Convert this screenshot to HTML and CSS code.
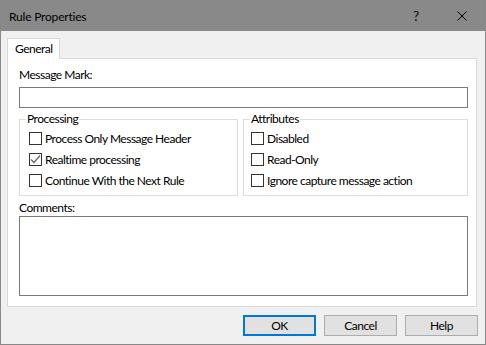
FILE: index.html
```html
<!DOCTYPE html>
<html>
<head>
<meta charset="utf-8">
<link rel="stylesheet" href="styles.css">
</head>
<body>
<div class="window">
  <div class="titlebar">
    <span class="title">Rule Properties</span>
    <span class="tb-btn">?</span>
    <span class="tb-btn"><svg width="10" height="10" viewBox="0 0 10 10"><path d="M0.5 0.5 L9.5 9.5 M9.5 0.5 L0.5 9.5" stroke="#000" stroke-width="1"/></svg></span>
  </div>
  <div class="content">
    <div class="tabs"><div class="tab">General</div></div>
    <div class="panel">
      <div class="label">Message Mark:</div>
      <div class="input"></div>
      <div class="groups">
        <fieldset class="group group-left">
          <legend>Processing</legend>
          <div class="check"><span class="box"></span><span>Process Only Message Header</span></div>
          <div class="check"><span class="box"><svg width="11" height="11" viewBox="0 0 11 11"><path d="M1 5.5 L4 8.5 L10 1.5" fill="none" stroke="#666" stroke-width="1.2"/></svg></span><span>Realtime processing</span></div>
          <div class="check"><span class="box"></span><span>Continue With the Next Rule</span></div>
        </fieldset>
        <fieldset class="group group-right">
          <legend>Attributes</legend>
          <div class="check"><span class="box"></span><span>Disabled</span></div>
          <div class="check"><span class="box"></span><span>Read-Only</span></div>
          <div class="check"><span class="box"></span><span>Ignore capture message action</span></div>
        </fieldset>
      </div>
      <div class="label label-comments">Comments:</div>
      <div class="textarea"></div>
    </div>
    <div class="buttons">
      <div class="btn btn-default">OK</div>
      <div class="btn">Cancel</div>
      <div class="btn">Help</div>
    </div>
  </div>
</div>
</body>
</html>
```

FILE: styles.css
```css
* { box-sizing: border-box; }
body {
  margin: 0;
  font-family: Lato, "Noto Sans", sans-serif;
  font-size: 12px;
  letter-spacing: -0.5px;
  color: #000;
}
.window {
  width: 486px;
  height: 345px;
  border: 1px solid #888;
  background: #f0f0f0;
  display: flex;
  flex-direction: column;
}
.titlebar {
  height: 30px;
  flex: none;
  background: #898989;
  display: flex;
  align-items: center;
  padding-left: 8px;
}
.title { flex: 1; letter-spacing: -0.2px; }
.tb-btn {
  width: 46px;
  height: 30px;
  display: flex;
  align-items: center;
  justify-content: center;
  font-size: 13px;
}
.content {
  flex: 1;
  display: flex;
  flex-direction: column;
  padding: 7px 8px 8px 6px;
}
.tabs { display: flex; height: 20px; flex: none; }
.tab {
  width: 53px;
  height: 21px;
  border: 1px solid #d9d9d9;
  border-bottom: none;
  background: #fff;
  padding-left: 7px;
  line-height: 19px;
  position: relative;
  z-index: 1;
}
.panel {
  flex: none;
  height: 249px;
  background: #fff;
  border: 1px solid #d9d9d9;
  padding: 8px 8px 10px 11px;
  display: flex;
  flex-direction: column;
}
.label { line-height: 16px; height: 16px; }
.input {
  height: 21px;
  margin-top: 4px;
  border: 1px solid #7a7a7a;
  background: #fff;
}
.groups {
  display: flex;
  gap: 5px;
  margin-top: 3px;
}
.group {
  margin: 0;
  border: 1px solid #dcdcdc;
  padding: 1px 0 4px 9px;
  min-width: 0;
}
.group legend {
  padding: 0 1px;
  line-height: 16px;
}
.group-left { width: 219px; flex: none; }
.group-left legend { margin-left: -3px; }
.group-right { flex: 1; padding-left: 7px; }
.group-right legend { margin-left: -1px; }
.check {
  display: flex;
  align-items: center;
  gap: 3px;
  height: 21px;
  white-space: nowrap;
}
.box {
  width: 13px;
  height: 13px;
  flex: none;
  border: 1px solid #333;
  background: #fff;
  display: flex;
  align-items: center;
  justify-content: center;
}
.label-comments { margin-top: 4px; }
.textarea {
  height: 80px;
  border: 1px solid #7a7a7a;
  background: #fff;
}
.buttons {
  display: flex;
  justify-content: flex-end;
  gap: 8px;
  margin-top: 8px;
  margin-right: -1px;
}
.btn {
  width: 73px;
  height: 21px;
  background: #e1e1e1;
  border: 1px solid #adadad;
  display: flex;
  align-items: center;
  justify-content: center;
}
.btn-default { border: 2px solid #0078d7; }
```
